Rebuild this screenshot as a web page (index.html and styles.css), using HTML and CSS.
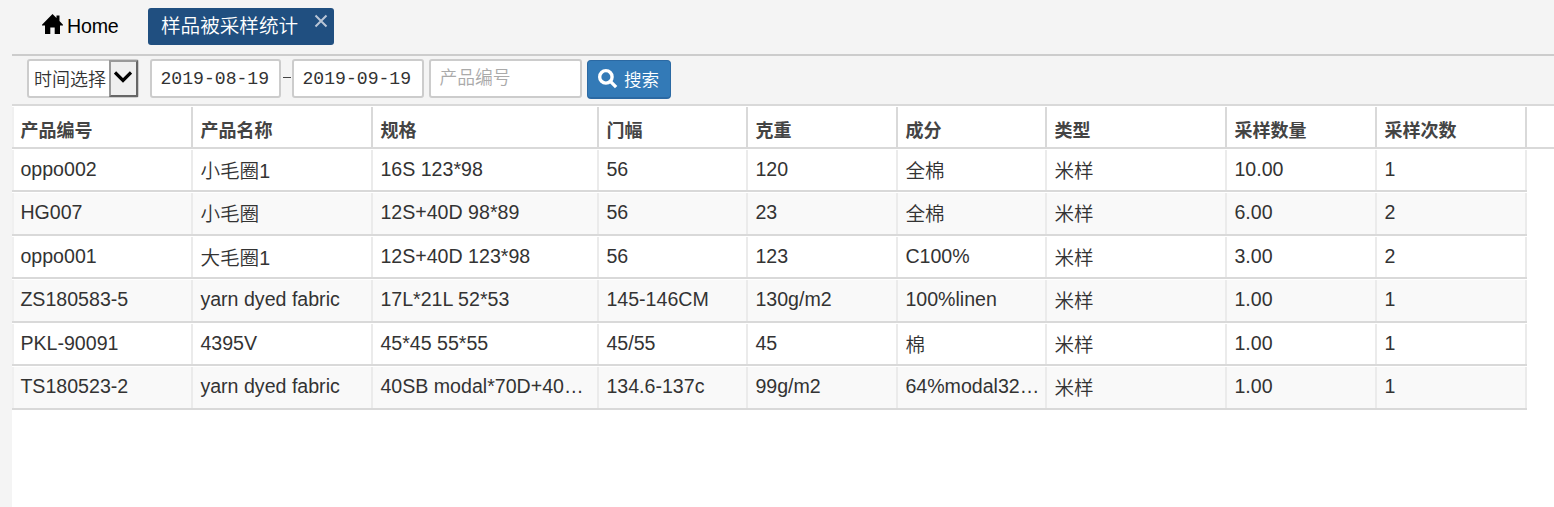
FILE: index.html
```html
<!DOCTYPE html>
<html lang="zh-CN">
<head>
<meta charset="utf-8">
<title>样品被采样统计</title>
<link rel="stylesheet" href="styles.css">
</head>
<body>
<main class="page">
  <nav class="tabs">
    <a class="home">
      <svg class="home-icon" viewBox="0 0 21 20"><path d="M10.5 0 L14.5 4 V1.5 H17.5 V7 L21 10.7 V11.5 H18 V20 H12.7 V13.5 H8.3 V20 H3 V11.5 H0 V10.7 Z"/></svg>
      <span>Home</span>
    </a>
    <a class="tab"><span>样品被采样统计</span>
      <svg class="close" viewBox="0 0 14 14"><path d="M1.5 1.5 L12.5 12.5 M12.5 1.5 L1.5 12.5"/></svg>
    </a>
  </nav>
  <form class="toolbar">
    <div class="select"><span class="select-text">时间选择</span><span class="arrow"><svg viewBox="0 0 18 12"><path d="M1 1.5 L9 9.5 L17 1.5"/></svg></span></div>
    <div class="field date first">2019-08-19</div>
    <span class="dash"></span>
    <div class="field date second">2019-09-19</div>
    <div class="field product">产品编号</div>
    <div class="search"><svg viewBox="0 0 19 19"><circle cx="7.5" cy="7.5" r="5.9"/><path d="M12 12 L17.2 17.2"/></svg><span>搜索</span></div>
  </form>
  <section class="grid">
    <div class="row head"><div>产品编号</div><div>产品名称</div><div>规格</div><div>门幅</div><div>克重</div><div>成分</div><div>类型</div><div>采样数量</div><div>采样次数</div></div>
    <div class="row"><div>oppo002</div><div class="zh">小毛圈1</div><div>16S 123*98</div><div>56</div><div>120</div><div class="zh">全棉</div><div class="zh">米样</div><div>10.00</div><div>1</div></div>
    <div class="row alt"><div>HG007</div><div class="zh">小毛圈</div><div>12S+40D 98*89</div><div>56</div><div>23</div><div class="zh">全棉</div><div class="zh">米样</div><div>6.00</div><div>2</div></div>
    <div class="row"><div>oppo001</div><div class="zh">大毛圈1</div><div>12S+40D 123*98</div><div>56</div><div>123</div><div>C100%</div><div class="zh">米样</div><div>3.00</div><div>2</div></div>
    <div class="row alt"><div>ZS180583-5</div><div>yarn dyed fabric</div><div>17L*21L 52*53</div><div>145-146CM</div><div>130g/m2</div><div>100%linen</div><div class="zh">米样</div><div>1.00</div><div>1</div></div>
    <div class="row"><div>PKL-90091</div><div>4395V</div><div>45*45 55*55</div><div>45/55</div><div>45</div><div class="zh">棉</div><div class="zh">米样</div><div>1.00</div><div>1</div></div>
    <div class="row alt"><div>TS180523-2</div><div>yarn dyed fabric</div><div>40SB modal*70D+40…</div><div>134.6-137c</div><div>99g/m2</div><div>64%modal32…</div><div class="zh">米样</div><div>1.00</div><div>1</div></div>
  </section>
</main>
</body>
</html>
```
FILE: styles.css
```css
* { box-sizing: border-box; }
body {
  margin: 0;
  background: #f4f4f4;
  color: #333;
  font-family: "Liberation Sans", "Noto Sans CJK SC", sans-serif;
  font-size: 19.6px;
  font-weight: 350;
}
.page { display: flex; flex-direction: column; height: 507px; margin-left: 12px; overflow: hidden; }
svg { display: block; flex: none; }

.tabs { display: flex; height: 56px; padding-top: 8px; border-bottom: 2px solid #ccc; }
.home { display: flex; width: 136px; height: 37px; padding-left: 30px; color: #000; letter-spacing: -0.2px; line-height: 36px; }
.home-icon { width: 21px; height: 20px; margin: 6px 4px 0 0; }
.tab { display: flex; justify-content: space-between; width: 186px; height: 37px; padding: 0 6px 0 13px; border-radius: 3px; background: #204f80; color: #fff; line-height: 37px; }
.close { width: 14px; height: 14px; margin-top: 6px; fill: none; stroke: #b9c6d6; stroke-width: 2; }

.toolbar { display: flex; height: 50px; padding: 3px 0 0 15px; border-bottom: 2px solid #d9d9d9; }
.select, .field { height: 39px; border: 2px solid #ccc; border-radius: 3px; background: #fff; }
.select { display: flex; width: 112px; margin-right: 11px; font-size: 18px; line-height: 39px; }
.select-text { flex: none; width: 80px; padding-left: 5px; white-space: nowrap; }
.arrow { flex: none; width: 29px; height: 37px; margin-top: -1px; padding: 9px 0 0 3px; border: 2px solid; border-color: #999 #666 #666 #999; background: #efefef; }
.arrow svg { width: 18px; height: 12px; fill: none; stroke: #000; stroke-width: 3.2; }
.date { font-family: "Liberation Mono", monospace; font-size: 18.1px; line-height: 36px; padding-left: 8.5px; }
.first { width: 131px; }
.second { width: 132px; margin-right: 5px; }
.dash { width: 8px; height: 1px; margin: 18px 1px 0 2px; background: #444; }
.product { width: 153px; margin-right: 5px; padding-left: 8.5px; color: #aaa; font-size: 17.8px; line-height: 35px; }
.search { display: flex; width: 84px; height: 39px; margin-top: 1px; padding-left: 10px; border: 1px solid #2b69a3; border-bottom-width: 2px; border-radius: 4px; background: #337ab7; color: #fff; font-size: 17.6px; line-height: 38px; }
.search svg { width: 20px; height: 20px; margin: 8px 6px 0 0; fill: none; stroke: #fff; stroke-width: 3.2; }

.grid { flex: 1; background: #fff; }
.row {
  display: grid;
  grid-template-columns: 181px 180px 226px 149px 150px 149px 180px 150px 150px;
  width: 1515px;
  height: 43px;
  padding-top: 1px;
  border-bottom: 2px solid #d9d9d9;
  line-height: 39px;
}
.row > div { padding-left: 7.4px; border-right: 2px solid #ebebeb; white-space: nowrap; overflow: hidden; }
.row > div:first-child { padding-left: 6.4px; border-left: 2px solid #f0f0f0; }
.alt { height: 44px; }
.alt > div { background: #f9f9f9; line-height: 38px; }
.row > .zh { line-height: 42px; }
.alt > .zh { line-height: 43px; }
.row.head { width: auto; color: #444; font-size: 18px; font-weight: 700; line-height: 48px; }
.head > div { height: 40px; border-right-color: #d9d9d9; }
```
